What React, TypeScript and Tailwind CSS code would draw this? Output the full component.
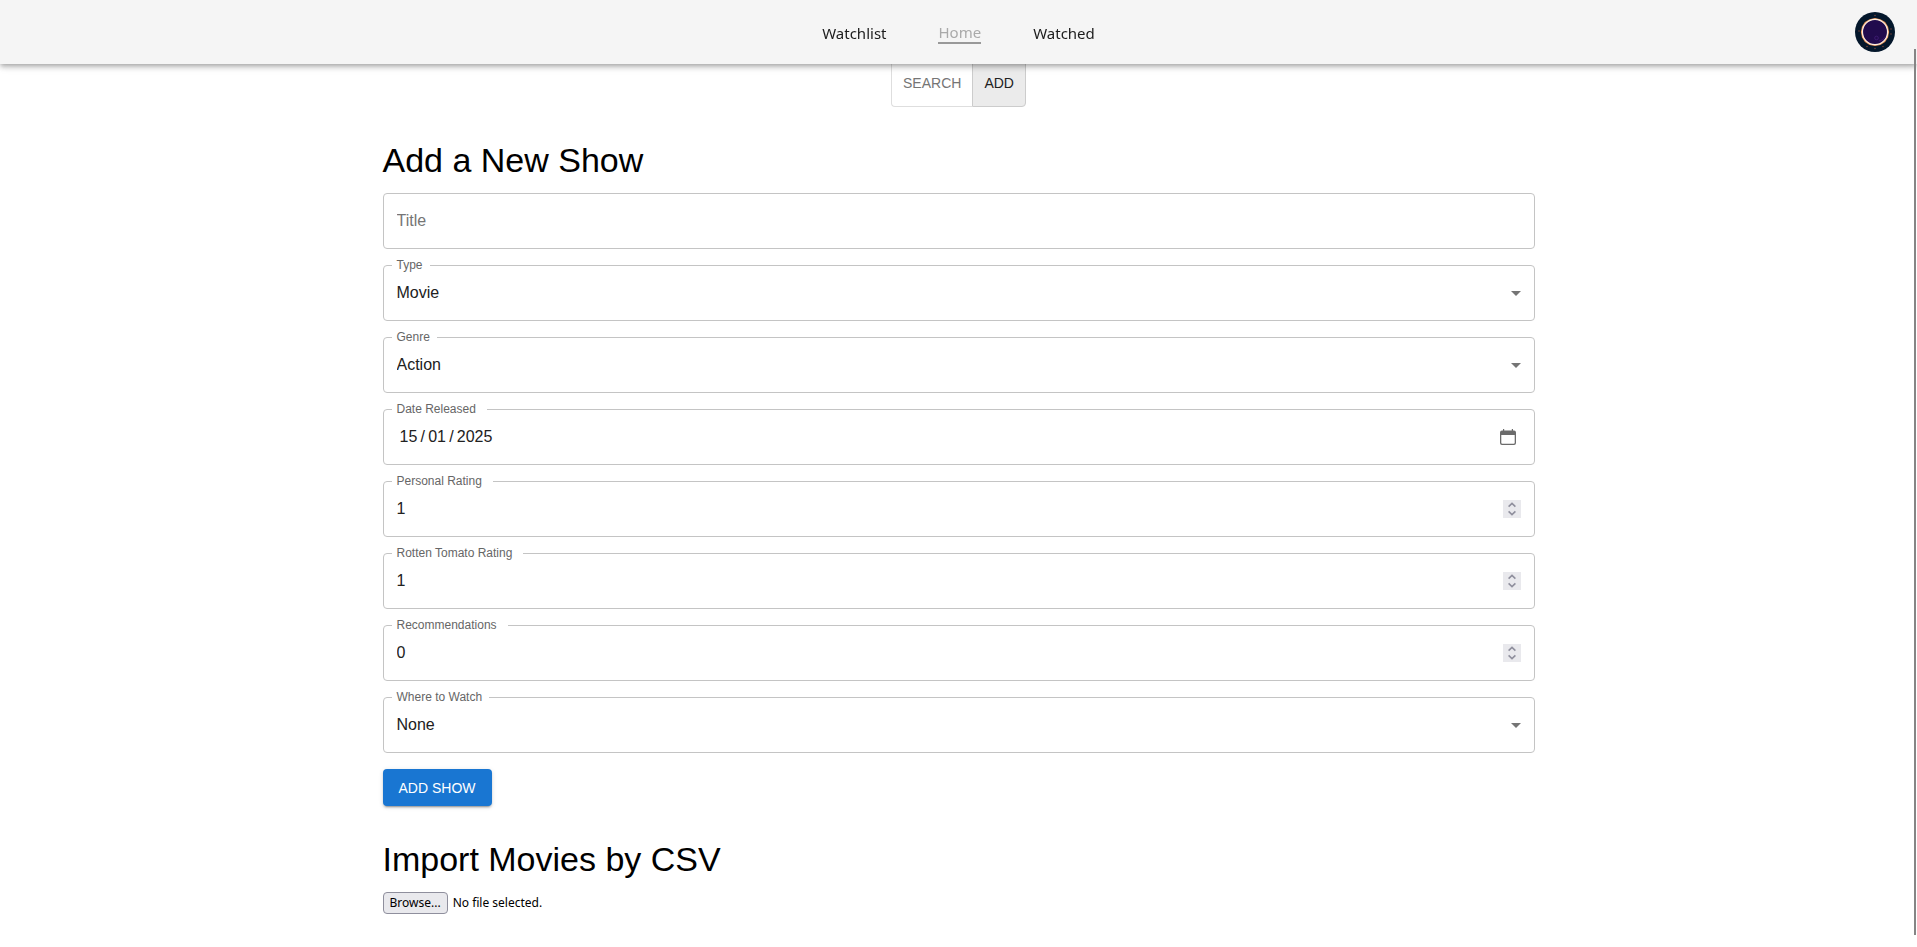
import React, { useRef, useState } from "react";

const fieldBox =
  "h-14 w-full rounded border border-[#c4c4c4] bg-transparent px-[13px] text-base text-[#212121] outline-none focus:border-[#1976d2]";

type FieldProps = {
  id: string;
  label: string;
  wideNotch?: boolean;
  children: React.ReactNode;
};

function Field({ id, label, wideNotch, children }: FieldProps) {
  return (
    <div className="relative">
      {children}
      <label
        htmlFor={id}
        className={`absolute -top-2 left-[9px] bg-white pl-[5px] text-xs leading-4 text-[#666666] ${
          wideNotch ? "pr-[11px]" : "pr-[7px]"
        }`}
      >
        {label}
      </label>
    </div>
  );
}

function SelectField({ id, label, options }: { id: string; label: string; options: string[] }) {
  return (
    <Field id={id} label={label}>
      <select id={id} defaultValue={options[0]} className={`${fieldBox} appearance-none`}>
        {options.map((option) => (
          <option key={option}>{option}</option>
        ))}
      </select>
      <svg
        viewBox="0 0 24 24"
        className="pointer-events-none absolute top-4 right-[7px] size-6 fill-[#757575]"
        aria-hidden="true"
      >
        <path d="M7 10l5 5 5-5z" />
      </svg>
    </Field>
  );
}

function NumberField({ id, label, initial }: { id: string; label: string; initial: number }) {
  const [value, setValue] = useState(initial);
  return (
    <Field id={id} label={label} wideNotch>
      <input
        id={id}
        type="number"
        value={value}
        onChange={(event) => setValue(Number(event.target.value))}
        className={`${fieldBox} [appearance:textfield] [&::-webkit-inner-spin-button]:appearance-none`}
      />
      <div className="absolute top-[19px] right-[14px] flex size-[18px] flex-col bg-[#e9e9ed]">
        <button type="button" aria-label={`Increase ${label}`} onClick={() => setValue(value + 1)} className="h-[9px] w-full">
          <svg viewBox="0 0 18 9" className="block h-[9px] w-full fill-none stroke-[#8f8f9d] stroke-[1.6]">
            <path d="M5.6 6.6L9 3.4l3.4 3.2" />
          </svg>
        </button>
        <button type="button" aria-label={`Decrease ${label}`} onClick={() => setValue(value - 1)} className="h-[9px] w-full">
          <svg viewBox="0 0 18 9" className="block h-[9px] w-full fill-none stroke-[#8f8f9d] stroke-[1.6]">
            <path d="M5.6 2.4L9 5.6l3.4-3.2" />
          </svg>
        </button>
      </div>
    </Field>
  );
}

function DateField({ id, label }: { id: string; label: string }) {
  return (
    <Field id={id} label={label} wideNotch>
      <input id={id} type="text" defaultValue={"15\u2009/\u200901\u2009/\u20092025"} className={`${fieldBox} pl-4`} />
      <button type="button" aria-label="Open calendar" className="absolute top-5 right-[19px] size-4">
        <svg viewBox="0 0 16 16" className="block size-4">
          <path
            fill="#6b6b6b"
            fillRule="evenodd"
            d="M3 0h1.2v1.5h7.6V0H13v1.5h1a2 2 0 0 1 2 2V14a2 2 0 0 1-2 2H2a2 2 0 0 1-2-2V3.500a2 2 0 0 1 2-2h1zM1.300 6v7.700a1 1 0 0 0 1 1h11.400a1 1 0 0 0 1-1V6z"
          />
        </svg>
      </button>
    </Field>
  );
}

function Avatar() {
  return (
    <svg viewBox="0 0 40 40" className="size-10" aria-hidden="true">
      <circle cx="20" cy="20" r="20" fill="#04172b" />
      <path
        d="M20 6l5.400 1.300 4.700 2.800 3 4.600 1 5.300-1 5.300-3 4.700-4.700 2.900L20 34l-5.400-1.100-4.700-2.900-3-4.700-1-5.300 1-5.300 3-4.600 4.700-2.800z"
        fill="#ea9257"
      />
      <circle cx="20" cy="20" r="12.600" fill="#210b4d" stroke="#fdeedd" strokeWidth="1.300" />
      <g fill="#8a4a3c">
        <circle cx="20" cy="3.500" r="0.700" />
        <circle cx="4" cy="19" r="0.700" />
        <circle cx="36" cy="17" r="0.700" />
        <circle cx="36" cy="22" r="0.700" />
        <circle cx="28" cy="34.500" r="0.700" />
        <circle cx="12" cy="34.500" r="0.700" />
        <circle cx="20" cy="36.500" r="0.700" />
      </g>
      <g fill="none" stroke="#3c1a70" strokeWidth="1">
        <circle cx="21.500" cy="26" r="1.800" />
        <path d="M24 29c3-.5 5-2 6.500-4.500" />
      </g>
    </svg>
  );
}

function Header() {
  return (
    <header className="fixed inset-x-0 top-0 z-10 flex h-16 items-center justify-center bg-[#f5f5f5] shadow-[0_2px_4px_-1px_rgba(0,0,0,0.2),0_4px_5px_0_rgba(0,0,0,0.14),0_1px_10px_0_rgba(0,0,0,0.12)]">
      <nav className="flex items-center gap-[52px] pt-0.5 font-['Noto_Sans',sans-serif] text-[15px] text-[#1c1c1c]">
        <a href="#watchlist">Watchlist</a>
        <a href="#home" className="border-b-2 border-[#999999] leading-5 text-[#aaaaaa]" aria-current="page">
          Home
        </a>
        <a href="#watched">Watched</a>
      </nav>
      <button type="button" aria-label="Account" className="absolute top-3 right-[22px] size-10 rounded-full">
        <Avatar />
      </button>
    </header>
  );
}

export default function App() {
  const fileInput = useRef<HTMLInputElement>(null);

  return (
    <div className="min-h-screen bg-white font-['Liberation_Sans',Arial,sans-serif]">
      <Header />
      <div className="fixed top-[49px] right-px bottom-3 z-20 w-0.5 bg-[#858585]" />

      <main className="mx-auto max-w-[1200px] px-6 pt-[59px] pb-8">
        <div className="mb-8 flex justify-center">
          <button type="button" className="h-12 rounded-l border border-r-0 border-[#dedede] px-[11px] text-sm text-[#757575]">
            SEARCH
          </button>
          <button
            type="button"
            aria-pressed="true"
            className="h-12 rounded-r border border-[#cccccc] bg-[#ebebeb] px-[11px] text-sm text-[#212121]"
          >
            ADD
          </button>
        </div>

        <h1 className="mb-3 text-[34px] leading-[42px] text-black">Add a New Show</h1>
        <form className="flex flex-col gap-4" onSubmit={(event) => event.preventDefault()}>
          <input
            type="text"
            aria-label="Title"
            placeholder="Title"
            className={`${fieldBox} placeholder:text-[#757575]`}
          />
          <SelectField id="type" label="Type" options={["Movie", "Series"]} />
          <SelectField id="genre" label="Genre" options={["Action", "Comedy", "Drama"]} />
          <DateField id="released" label="Date Released" />
          <NumberField id="personal" label="Personal Rating" initial={1} />
          <NumberField id="tomato" label="Rotten Tomato Rating" initial={1} />
          <NumberField id="recommendations" label="Recommendations" initial={0} />
          <SelectField id="where" label="Where to Watch" options={["None", "Netflix"]} />
          <button
            type="submit"
            className="h-[37px] self-start rounded bg-[#1976d2] px-4 text-sm text-white shadow-[0_3px_1px_-2px_rgba(0,0,0,0.2),0_2px_2px_0_rgba(0,0,0,0.14),0_1px_5px_0_rgba(0,0,0,0.12)]"
          >
            ADD SHOW
          </button>
        </form>

        <h1 className="mt-8 mb-3 text-[34px] leading-[42px] text-black">Import Movies by CSV</h1>
        <div className="flex items-center gap-[5px] font-['Noto_Sans',sans-serif] text-xs text-black">
          <input ref={fileInput} type="file" accept=".csv" aria-label="CSV file" className="hidden" />
          <button
            type="button"
            onClick={() => fileInput.current?.click()}
            className="flex h-[22px] items-center rounded border border-[#8f8f9d] bg-[#e9e9ed] px-1.5"
          >
            Browse...
          </button>
          <span>No file selected.</span>
        </div>
      </main>
    </div>
  );
}
